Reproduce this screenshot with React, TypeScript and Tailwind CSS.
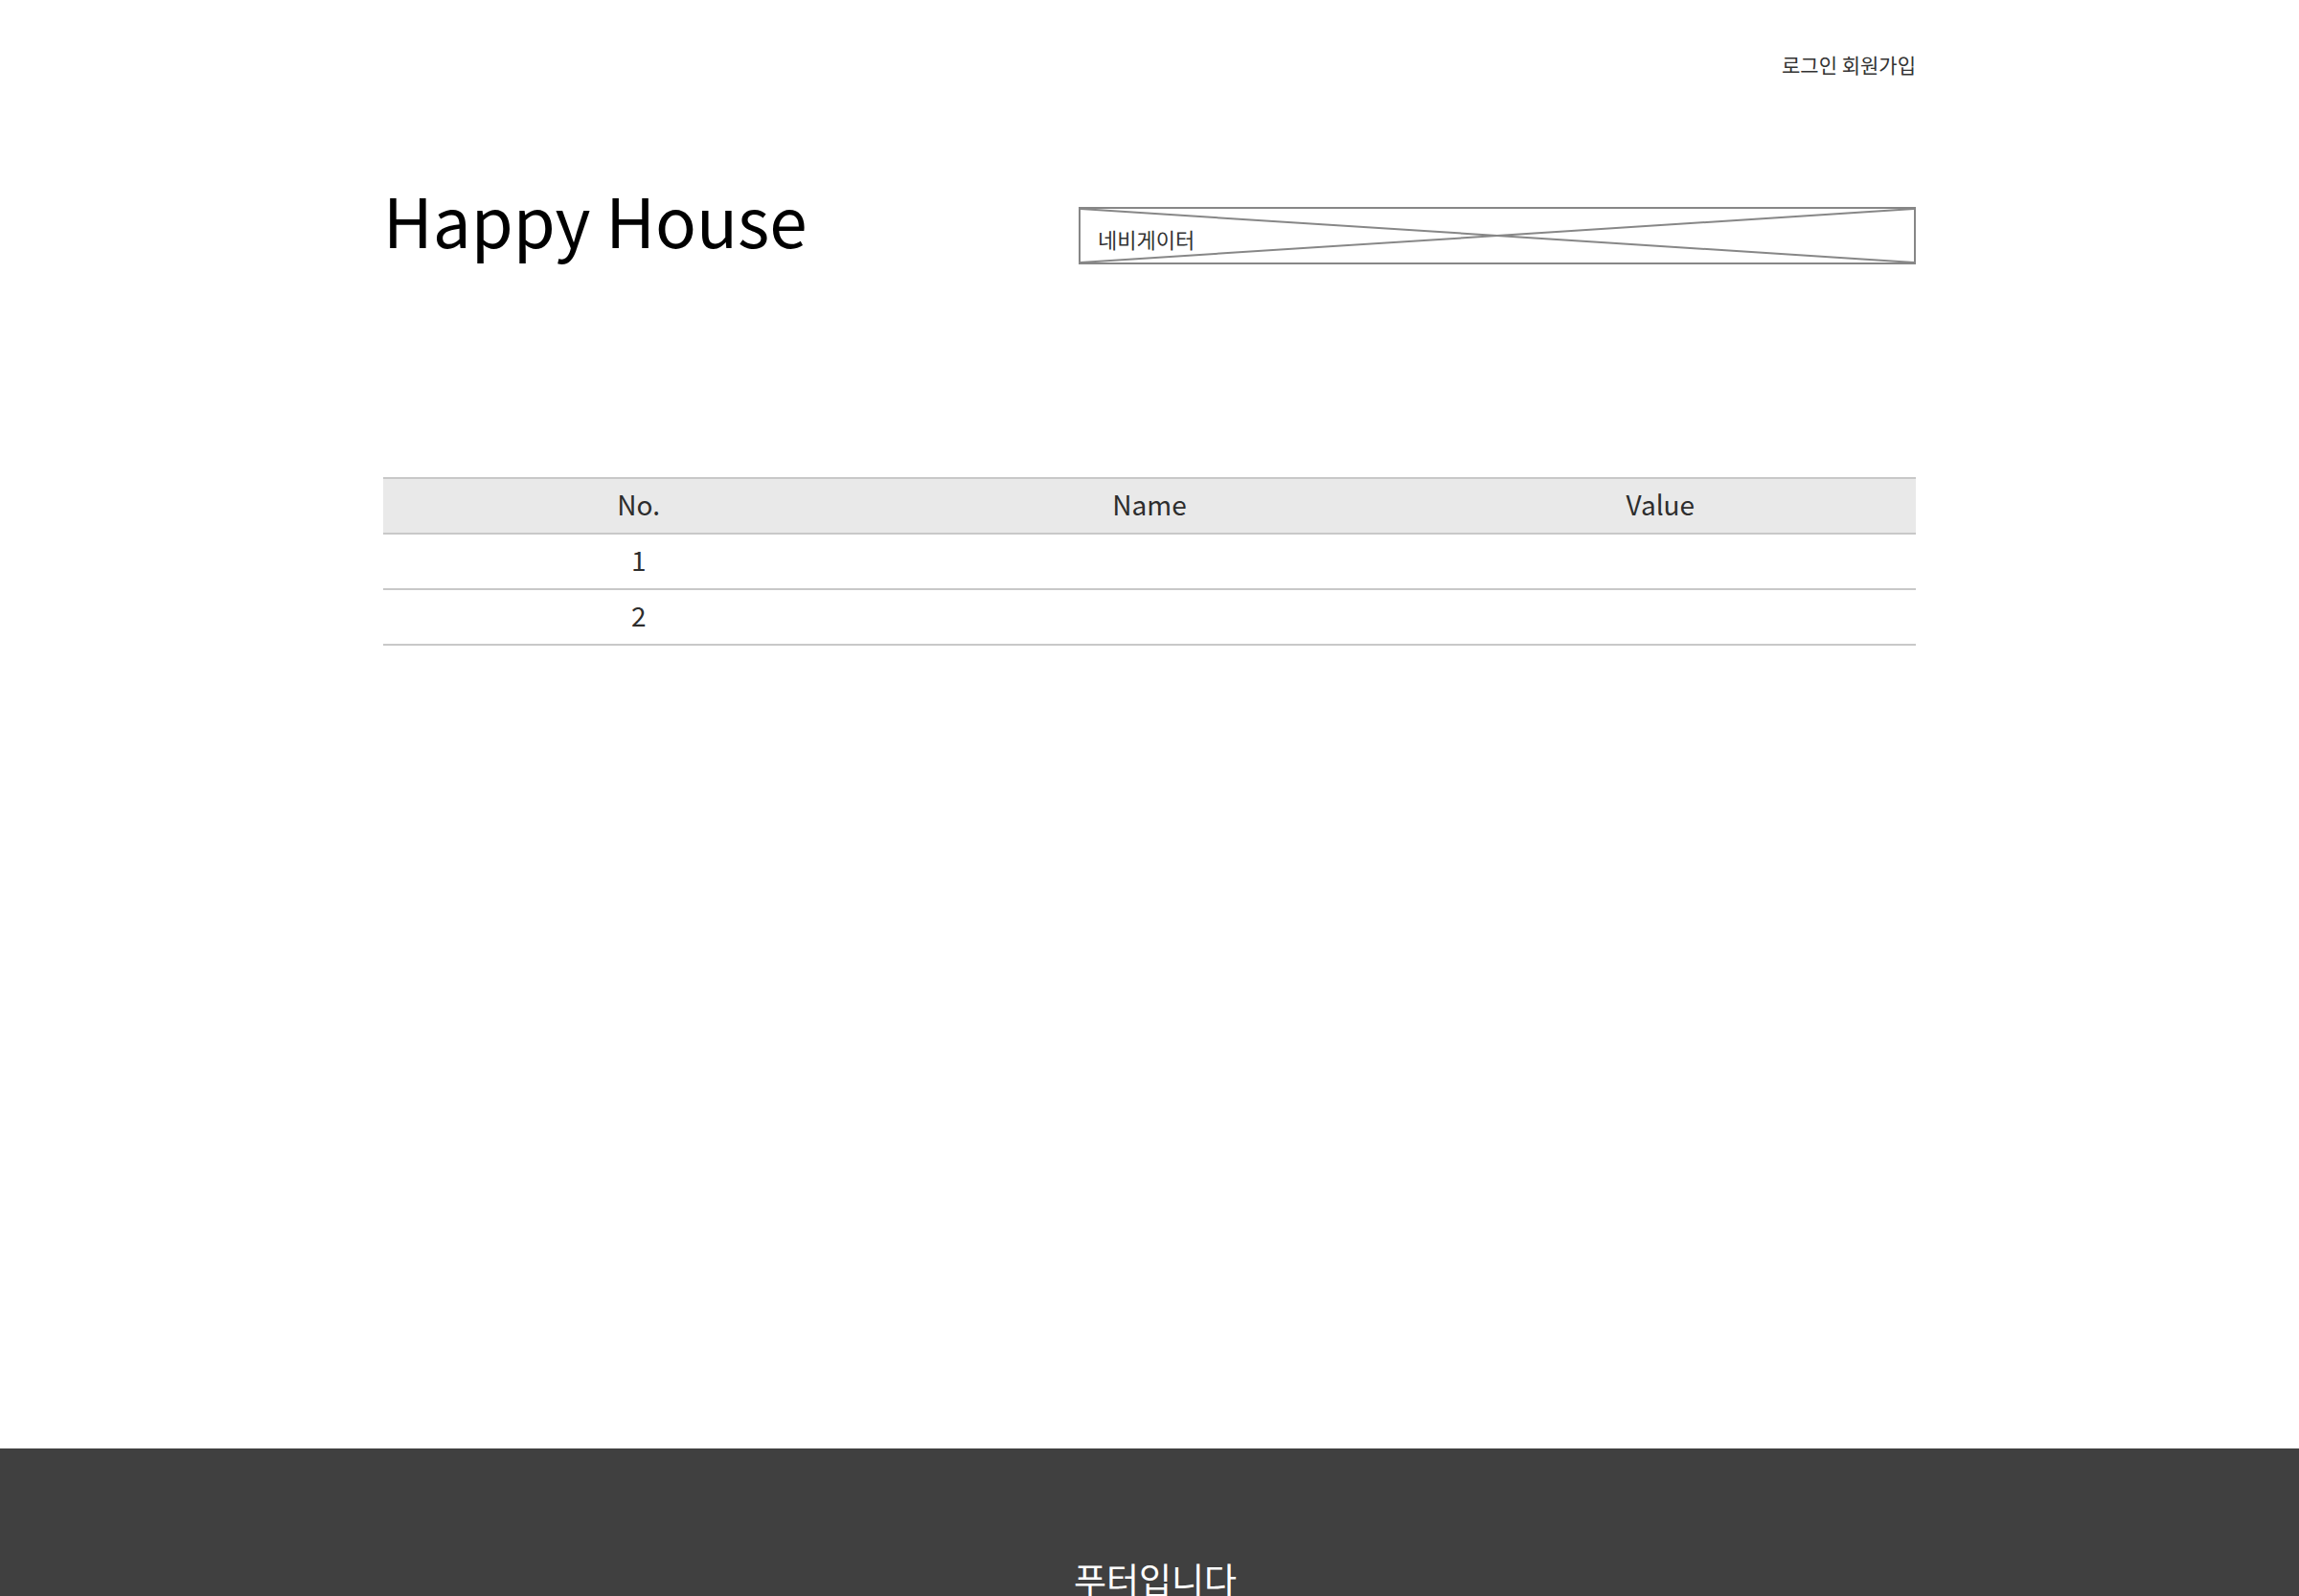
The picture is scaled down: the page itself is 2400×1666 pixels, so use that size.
const font = { fontFamily: '"Noto Sans CJK KR", "Noto Sans", sans-serif' };

const rows = [
  { no: 1, name: "", value: "" },
  { no: 2, name: "", value: "" },
];

function NavPlaceholder() {
  return (
    <div className="relative w-[874px] h-[60px] border-2 border-[#878787] bg-white">
      <svg
        className="absolute inset-0 w-full h-full"
        viewBox="0 0 100 100"
        preserveAspectRatio="none"
      >
        <line x1="0" y1="0" x2="100" y2="100" stroke="#878787" strokeWidth="2" vectorEffect="non-scaling-stroke" />
        <line x1="100" y1="0" x2="0" y2="100" stroke="#878787" strokeWidth="2" vectorEffect="non-scaling-stroke" />
      </svg>
      <span className="absolute left-[18px] top-[16px] text-[22px] leading-[30px] text-[#333]">
        네비게이터
      </span>
    </div>
  );
}

export default function App() {
  return (
    <div className="min-h-screen bg-white flex flex-col" style={font}>
      <div className="h-[1512px] shrink-0">
        <div className="w-[1600px] mx-auto">
          <div className="flex justify-end pt-[52px]">
            <span className="text-[21px] leading-[30px] text-[#333]">로그인 회원가입</span>
          </div>

          <div className="flex justify-between items-start mt-[134px]">
            <h1 className="text-[71px] leading-none text-black -mt-[23px]">Happy House</h1>
            <NavPlaceholder />
          </div>

          <div className="mt-[222px] text-[28px] text-[#2d2d2d]">
            <div className="grid grid-cols-3 h-[60px] pb-[5px] items-center text-center bg-[#e9e9e9] border-y-2 border-[#c8c8c8]">
              <div>No.</div>
              <div>Name</div>
              <div>Value</div>
            </div>
            {rows.map((r) => (
              <div
                key={r.no}
                className="grid grid-cols-3 h-[58px] pb-[5px] items-center text-center border-b-2 border-[#c8c8c8]"
              >
                <div>{r.no}</div>
                <div>{r.name}</div>
                <div>{r.value}</div>
              </div>
            ))}
          </div>
        </div>
      </div>

      <footer className="bg-[#404040] h-[300px] flex justify-center pt-[112px] pl-[12px]">
        <span className="text-[37px] leading-[48px] text-white">푸터입니다</span>
      </footer>
    </div>
  );
}
